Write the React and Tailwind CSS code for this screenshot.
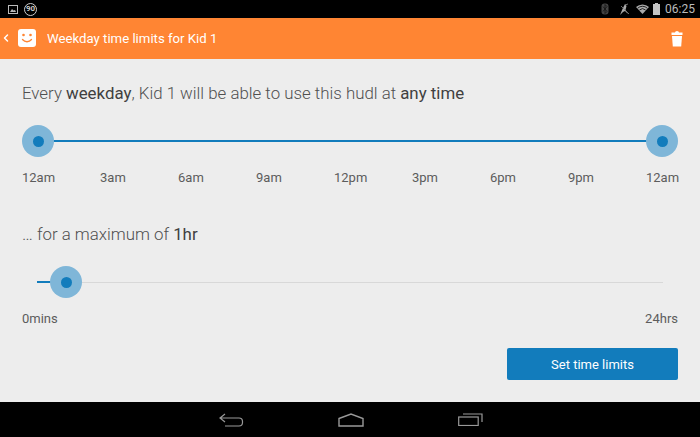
import React from "react";
import { ChevronLeft } from "lucide-react";

const hours = ["12am", "3am", "6am", "9am", "12pm", "3pm", "6pm", "9pm", "12am"];

const Handle = ({ className }) => (
  <div className={`absolute top-0 flex h-[32px] w-[32px] items-center justify-center rounded-full bg-[#7fb6d8] ${className}`}>
    <div className="h-[11px] w-[11px] rounded-full bg-[#127cbc]" />
  </div>
);

const StatusBar = () => (
  <div className="flex h-[18px] items-center justify-between bg-black pl-[8px] pr-[5px]">
    <div className="flex items-center gap-[6px]">
      <svg width="10" height="9" viewBox="0 0 10 9" fill="none">
        <rect x="0.5" y="0.5" width="9" height="8" stroke="#bbb" />
        <path d="M2 7l2-3 1.5 1.5L7 5l1 2z" fill="#bbb" />
      </svg>
      <div className="flex h-[13px] w-[13px] items-center justify-center rounded-full border border-[#ccc] text-[8px] font-bold leading-none text-[#ccc]">90</div>
    </div>
    <div className="flex items-center">
      <svg width="8" height="12" viewBox="0 0 8 12" fill="none" className="mr-[10px]">
        <rect x="0.5" y="0.5" width="7" height="11" rx="3" fill="#444" />
        <path d="M2 3.5l4 5-2 2V1.5l2 2-4 5" stroke="#111" strokeWidth="0.8" />
      </svg>
      <svg width="11" height="13" viewBox="0 0 11 13" fill="none" className="mr-[6px]">
        <path d="M1 12l2.500-6L6 1l1.500 2-1 4 2.500 4-3-3-2 1z" fill="#aaa" />
        <path d="M6 2l3-1M2 3l8 8" stroke="#888" strokeWidth="0.8" />
      </svg>
      <svg width="13" height="10" viewBox="0 0 13 10" className="mr-[4px]">
        <path d="M6.5 10L0 3a9.5 9.5 0 0 1 13 0z" fill="#aaa" />
        <path d="M1.7 4.2a7 7 0 0 1 9.6 0M3.4 6a4.6 4.6 0 0 1 6.2 0" stroke="#000" strokeWidth="0.8" fill="none" />
      </svg>
      <svg width="7" height="12" viewBox="0 0 7 12" className="mr-[5px]">
        <path d="M2 0h3v1h2v11H0V1h2z" fill="#c4c4c4" />
      </svg>
      <span className="text-[12px] leading-none text-[#bbb]">06:25</span>
    </div>
  </div>
);

const App = () => {
  return (
    <div className="flex h-[437px] w-[700px] flex-col overflow-hidden bg-[#ededed] font-['Roboto',sans-serif] text-[#5c5c5c]">
      <StatusBar />

      <div className="flex h-[41px] items-center justify-between bg-[#ff8533] pr-[17px] text-white">
        <div className="flex items-center">
          <ChevronLeft size={12} strokeWidth={3} className="mr-[6px]" />
          <div className="flex h-[18px] w-[18px] items-center justify-center rounded-[3px] bg-white">
            <svg width="14" height="12" viewBox="0 0 14 12" fill="none">
              <circle cx="3.5" cy="3" r="1.3" fill="#ff8533" />
              <circle cx="10.5" cy="3" r="1.3" fill="#ff8533" />
              <path d="M2.5 7.5c2.5 3 6.5 3 9 0" stroke="#ff8533" strokeWidth="1.3" strokeLinecap="round" />
            </svg>
          </div>
          <span className="ml-[11px] pt-[1px] text-[13.2px]">Weekday time limits for Kid 1</span>
        </div>
        <svg width="12" height="16" viewBox="0 0 12 16" fill="white">
          <path d="M4 1.5a2 1.5 0 0 1 4 0h3.5v2.5H.5V1.500z" />
          <path d="M1 5h10l-.8 10.500H1.800z" />
        </svg>
      </div>

      <div className="flex flex-1 flex-col px-[22px]">
        <p className="mt-[24px] text-[16.85px] font-light leading-[20px] text-[#505050]">
          Every <b className="font-normal text-[#404040]">weekday</b>, Kid 1 will be able to use this hudl at <b className="font-normal text-[#404040]">any time</b>
        </p>

        <div className="relative mt-[22px] flex h-[32px] items-center">
          <div className="mx-[15px] h-[2px] flex-1 bg-[#127cbc]" />
          <Handle className="left-0" />
          <Handle className="right-0" />
        </div>

        <div className="mt-[13px] grid grid-cols-[repeat(8,78px)_auto] text-[13px] leading-[16px]">
          {hours.map((h, i) => (
            <span key={i}>{h}</span>
          ))}
        </div>

        <p className="mt-[38px] text-[16.85px] font-light leading-[20px] text-[#505050]">
          … for a maximum of <b className="font-normal text-[#404040]">1hr</b>
        </p>

        <div className="relative mt-[22px] flex h-[32px] items-center px-[15px]">
          <div className="h-[2px] w-[29px] bg-[#127cbc]" />
          <div className="h-[1px] flex-1 bg-[#d8d8d8]" />
          <Handle className="left-[28px]" />
        </div>

        <div className="mt-[13px] flex justify-between text-[13px] leading-[16px]">
          <span>0mins</span>
          <span>24hrs</span>
        </div>

        <div className="mt-[21px] flex justify-end">
          <button className="h-[32px] w-[171px] rounded-[2px] bg-[#127cbc] pt-[2px] text-[13px] text-white">Set time limits</button>
        </div>
      </div>

      <div className="flex h-[35px] items-center justify-center gap-[94px] bg-black pl-[2px]">
        <svg width="25" height="14" viewBox="0 0 25 14" fill="none" stroke="#999" strokeWidth="1.2">
          <path d="M6 1L1 5l5 4M1 5h19a3.500 3.500 0 0 1 3.500 3.500v1A3.500 3.500 0 0 1 20 13H6" />
        </svg>
        <svg width="26" height="14" viewBox="0 0 26 14" fill="none" stroke="#999" strokeWidth="1.4">
          <path d="M1 5.500L13 1l12 4.500V13H1z" />
        </svg>
        <svg width="25" height="13" viewBox="0 0 25 13" fill="none" stroke="#999" strokeWidth="1.2">
          <rect x="0.700" y="4" width="19.500" height="8.500" />
          <path d="M5 1h19v8" />
        </svg>
      </div>
    </div>
  );
};

export default App;
